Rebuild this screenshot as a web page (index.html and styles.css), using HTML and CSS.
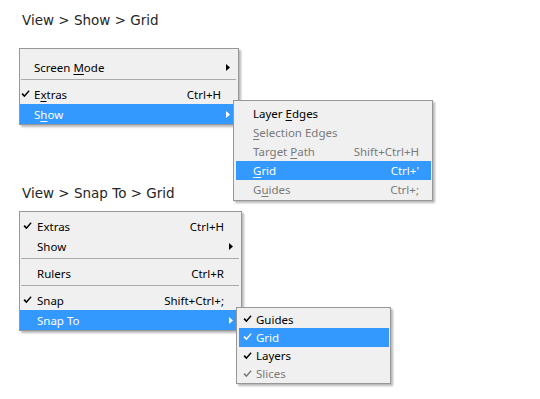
FILE: index.html
```html
<!DOCTYPE html>
<html>
<head>
<meta charset="utf-8">
<link rel="stylesheet" href="styles.css">
</head>
<body>
<section class="demo demo-show">
  <h2 class="title">View &gt; Show &gt; Grid</h2>
  <div class="menu menu-a">
    <div class="item"><span class="chk"></span><span class="lbl">Screen <u>M</u>ode</span><span class="sc"></span><span class="arr"><svg width="4" height="7" viewBox="0 0 4 7"><path d="M0 0L4 3.5L0 7Z"/></svg></span></div>
    <div class="sep"></div>
    <div class="item"><span class="chk"><svg width="9" height="8" viewBox="0 0 9 8"><path d="M0.5 4.2L1.8 3L3.4 4.9L7.6 0.3L8.6 1.3L3.4 7.2Z"/></svg></span><span class="lbl">E<u>x</u>tras</span><span class="sc">Ctrl+H</span><span class="arr"></span></div>
    <div class="item hl"><span class="chk"></span><span class="lbl">S<u>h</u>ow</span><span class="sc"></span><span class="arr"><svg width="4" height="7" viewBox="0 0 4 7"><path d="M0 0L4 3.5L0 7Z"/></svg></span></div>
    <div class="menu sub sub-a">
      <div class="item"><span class="chk"></span><span class="lbl">Layer <u>E</u>dges</span><span class="sc"></span></div>
      <div class="item dis"><span class="chk"></span><span class="lbl"><u>S</u>election Edges</span><span class="sc"></span></div>
      <div class="item dis"><span class="chk"></span><span class="lbl">Target <u>P</u>ath</span><span class="sc">Shift+Ctrl+H</span></div>
      <div class="item hl"><span class="chk"></span><span class="lbl"><u>G</u>rid</span><span class="sc">Ctrl+'</span></div>
      <div class="item dis"><span class="chk"></span><span class="lbl">G<u>u</u>ides</span><span class="sc">Ctrl+;</span></div>
    </div>
  </div>
</section>
<section class="demo demo-snap">
  <h2 class="title">View &gt; Snap To &gt; Grid</h2>
  <div class="menu menu-b">
    <div class="item"><span class="chk"><svg width="9" height="8" viewBox="0 0 9 8"><path d="M0.5 4.2L1.8 3L3.4 4.9L7.6 0.3L8.6 1.3L3.4 7.2Z"/></svg></span><span class="lbl">Extras</span><span class="sc">Ctrl+H</span><span class="arr"></span></div>
    <div class="item"><span class="chk"></span><span class="lbl">Show</span><span class="sc"></span><span class="arr"><svg width="4" height="7" viewBox="0 0 4 7"><path d="M0 0L4 3.5L0 7Z"/></svg></span></div>
    <div class="sep"></div>
    <div class="item"><span class="chk"></span><span class="lbl">Rulers</span><span class="sc">Ctrl+R</span><span class="arr"></span></div>
    <div class="sep"></div>
    <div class="item"><span class="chk"><svg width="9" height="8" viewBox="0 0 9 8"><path d="M0.5 4.2L1.8 3L3.4 4.9L7.6 0.3L8.6 1.3L3.4 7.2Z"/></svg></span><span class="lbl">Snap</span><span class="sc">Shift+Ctrl+;</span><span class="arr"></span></div>
    <div class="item hl"><span class="chk"></span><span class="lbl">Snap To</span><span class="sc"></span><span class="arr"><svg width="4" height="7" viewBox="0 0 4 7"><path d="M0 0L4 3.5L0 7Z"/></svg></span></div>
    <div class="menu sub sub-b">
      <div class="item"><span class="chk"><svg width="9" height="8" viewBox="0 0 9 8"><path d="M0.5 4.2L1.8 3L3.4 4.9L7.6 0.3L8.6 1.3L3.4 7.2Z"/></svg></span><span class="lbl">Guides</span></div>
      <div class="item hl"><span class="chk"><svg width="9" height="8" viewBox="0 0 9 8"><path d="M0.5 4.2L1.8 3L3.4 4.9L7.6 0.3L8.6 1.3L3.4 7.2Z"/></svg></span><span class="lbl">Grid</span></div>
      <div class="item"><span class="chk"><svg width="9" height="8" viewBox="0 0 9 8"><path d="M0.5 4.2L1.8 3L3.4 4.9L7.6 0.3L8.6 1.3L3.4 7.2Z"/></svg></span><span class="lbl">Layers</span></div>
      <div class="item dis"><span class="chk"><svg width="9" height="8" viewBox="0 0 9 8"><path d="M0.5 4.2L1.8 3L3.4 4.9L7.6 0.3L8.6 1.3L3.4 7.2Z"/></svg></span><span class="lbl">Slices</span></div>
    </div>
  </div>
</section>
</body>
</html>
```

FILE: styles.css
```css
* { box-sizing: border-box; }
html, body { margin: 0; padding: 0; background: #fff; }
body {
  width: 540px;
  height: 399px;
  overflow: hidden;
  padding-left: 19px;
  font-family: "Noto Sans", "Open Sans", sans-serif;
  font-size: 11.5px;
  color: #000;
}
.demo { display: flex; flex-direction: column; align-items: flex-start; }
.title {
  margin: 10px 0 0 3px;
  height: 20px;
  line-height: 20px;
  font-family: "DejaVu Sans", sans-serif;
  font-weight: normal;
  font-size: 13.5px;
  color: #262626;
}
.demo-show .title { margin-top: 10px; }
.demo-show .menu-a { margin-top: 18px; }
.demo-snap .title { margin-top: 58px; }
.demo-snap .menu-b { margin-top: 8px; }

.menu {
  position: relative;
  background: #f0f0f0;
  border: 1px solid #979797;
  box-shadow: 2px 2px 2px rgba(0,0,0,0.28);
  display: flex;
  flex-direction: column;
}
.item {
  display: flex;
  align-items: center;
  height: 20px;
  white-space: nowrap;
}
.item u { text-decoration: underline; text-underline-offset: 2px; }
.chk { display: flex; align-items: center; flex: none; }
.chk svg path { fill: #000; }
.lbl { flex: 1; }
.sc { flex: none; }
.arr { display: flex; align-items: center; flex: none; }
.arr svg path { fill: #000; }
.hl { background: #3399ff; color: #fff; }
.hl svg path { fill: #fff; }
.dis { color: #7a7a7a; }
.dis svg path { fill: #7a7a7a; }
.sep {
  height: 7px;
  padding-top: 2px;
  margin: 0 2px 0 1px;
}
.sep::before {
  content: "";
  display: block;
  border-top: 1px solid #a9a9a9;
}

/* first menu */
.menu-a { width: 220px; padding-top: 8px; }
.menu-a .chk { width: 14px; padding-left: 1px; }
.menu-a .arr { width: 17px; padding-left: 5px; }

/* second menu */
.menu-b { width: 223px; padding-top: 4px; }
.menu-b .chk { width: 17px; padding-left: 3px; }
.menu-b .arr { width: 17px; padding-left: 5px; }

/* submenus */
.sub { position: absolute; }
.sub .item { height: 19px; }
.sub-a {
  left: 213px;
  top: 51px;
  width: 200px;
  padding: 3px 1px 1px 2px;
}
.sub-a .chk { width: 17px; }
.sub-a .sc { padding-right: 12px; }

.sub-b {
  left: 216px;
  top: 95px;
  width: 155px;
  height: 77px;
  overflow: hidden;
  padding: 2px 1px 0 2px;
}
.sub-b .chk { width: 17px; padding-left: 4px; }
```
